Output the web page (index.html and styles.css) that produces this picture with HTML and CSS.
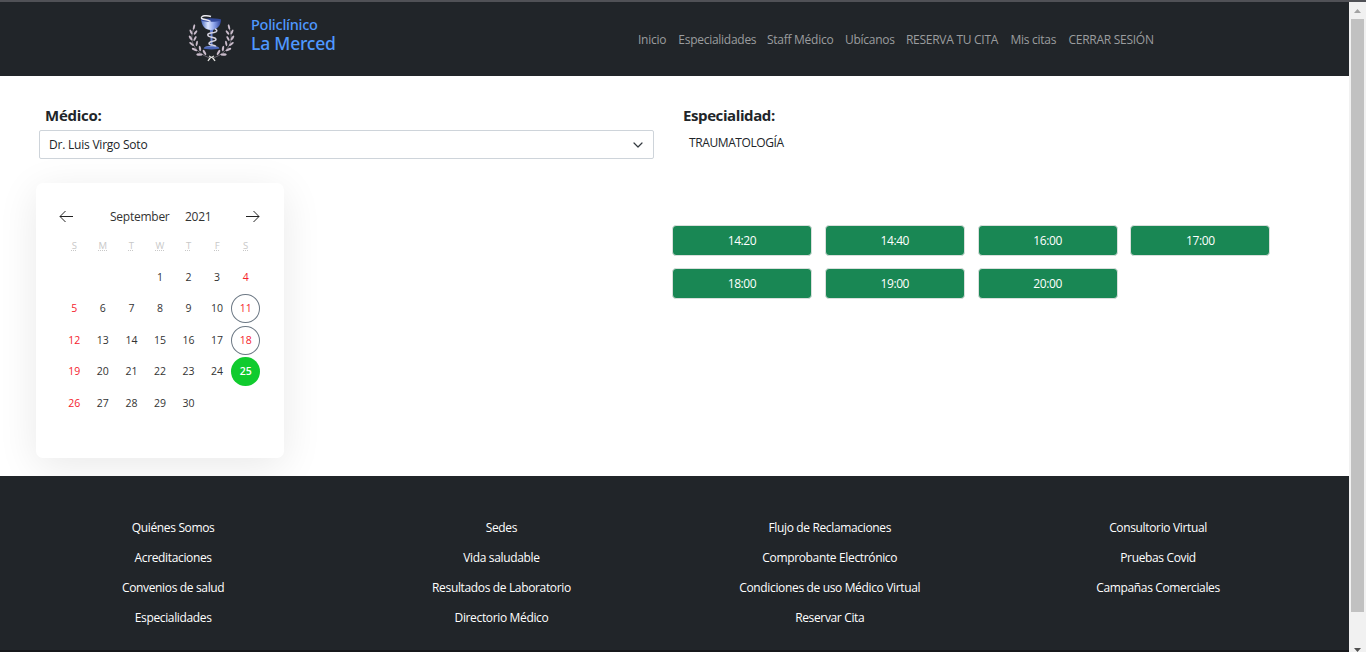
FILE: index.html
```html
<!DOCTYPE html>
<html lang="es">
<head>
<meta charset="utf-8">
<title>Policlínico La Merced</title>
<link rel="stylesheet" href="styles.css">
</head>
<body>
<div class="window">
<div class="page">
  <header class="header">
    <a class="brand">
      <svg class="logo" width="48" height="50" viewBox="0 0 48 50" fill="none">
        <defs>
          <linearGradient id="bowl" x1="0" x2="1"><stop offset="0" stop-color="#4466bd"/><stop offset=".35" stop-color="#dce6ff"/><stop offset=".65" stop-color="#8ba2ea"/><stop offset="1" stop-color="#2f459c"/></linearGradient>
          <g id="branch">
            <path d="M6 14C0 27 7 39 22 44" stroke="#8a828e" stroke-width=".7"/>
            <g fill="#c9bbca">
              <ellipse cx="6" cy="13" rx="1" ry="2.700" transform="rotate(15 6 13)"/>
              <ellipse cx="3" cy="18" rx="1" ry="2.700" transform="rotate(-25 3 18)"/>
              <ellipse cx="7.500" cy="18.500" rx="1" ry="2.600" transform="rotate(40 7.500 18.500)"/>
              <ellipse cx="2.600" cy="24" rx="1.100" ry="2.800" transform="rotate(-35 2.600 24)"/>
              <ellipse cx="7" cy="24.500" rx="1" ry="2.700" transform="rotate(30 7 24.500)"/>
              <ellipse cx="3.600" cy="30" rx="1.100" ry="2.900" transform="rotate(-52 3.600 30)"/>
              <ellipse cx="8.800" cy="29.500" rx="1" ry="2.700" transform="rotate(12 8.800 29.500)"/>
              <ellipse cx="6.500" cy="35.500" rx="1.200" ry="3" transform="rotate(-65 6.500 35.500)"/>
              <ellipse cx="12" cy="34.500" rx="1.100" ry="2.900" transform="rotate(-10 12 34.500)"/>
              <ellipse cx="11.500" cy="40.500" rx="1.300" ry="3.200" transform="rotate(-88 11.500 40.500)"/>
              <ellipse cx="16.500" cy="38.500" rx="1.200" ry="3" transform="rotate(-30 16.500 38.500)"/>
            </g>
          </g>
        </defs>
        <use href="#branch"/>
        <use href="#branch" transform="matrix(-1 0 0 1 47 0)"/>
        <path d="M20 47c1-2 3-4 6-5M27 47c-1-2-3-4-6-5" stroke="#e2e2df" stroke-width="1.300"/>
        <path d="M21.500 15h4l-1 4v14h-2V19z" fill="#6680ce"/>
        <path d="M13 5.500h20c0 6-4 10.500-10 10.500S14 12 13 5.500z" fill="url(#bowl)"/>
        <ellipse cx="23" cy="6" rx="10" ry="1.800" fill="#334a9c"/>
        <path d="M16 34c1-2 4-2 7-2s7 0 8 2z" fill="#7289ce"/>
        <ellipse cx="23.500" cy="34.200" rx="8" ry="1.300" fill="#4863b5"/>
        <path d="M23 2.500c-4-1.500-10-1-9.500 1.500.5 2 6 1 9 3.500" stroke="#eceaf0" stroke-width="1.500"/>
        <path d="M27 15c3 1 2 3-1 3.500-4 .5-7 1-6 3 1 2.500 8 1 8 4 0 2-7 1.500-7 4 0 2 6 1 7 3" stroke="#d5d3e0" stroke-width="1.500"/>
      </svg>
      <span class="brand-name"><span class="brand-top">Policlínico</span><span class="brand-bottom">La Merced</span></span>
    </a>
    <nav class="nav"><a>Inicio</a><a>Especialidades</a><a>Staff Médico</a><a>Ubícanos</a><a>RESERVA TU CITA</a><a>Mis citas</a><a>CERRAR SESIÓN</a></nav>
  </header>

  <main class="main">
    <section class="doctor">
      <h2 class="label doctor-label">Médico:</h2>
      <div class="select"><span>Dr. Luis Virgo Soto</span>
        <svg width="10" height="8" viewBox="0 0 10 8" fill="none"><path d="M1 2l4 4 4-4" stroke="#343a40" stroke-width="1.200" stroke-linecap="round" stroke-linejoin="round"/></svg>
      </div>
      <div class="calendar">
        <div class="calendar-head">
          <svg width="14" height="12" viewBox="0 0 14 12" fill="none"><path d="M14 5.500H1M6.500 0L1 5.500 6.500 11" stroke="#222" stroke-width="1"/></svg>
          <span class="month">September</span><span class="year">2021</span>
          <svg width="14" height="12" viewBox="0 0 14 12" fill="none"><path d="M0 5.500h13M7.500 0L13 5.500 7.500 11" stroke="#222" stroke-width="1"/></svg>
        </div>
        <div class="weekdays"><span><abbr title="Sunday">S</abbr></span><span><abbr title="Monday">M</abbr></span><span><abbr title="Tuesday">T</abbr></span><span><abbr title="Wednesday">W</abbr></span><span><abbr title="Thursday">T</abbr></span><span><abbr title="Friday">F</abbr></span><span><abbr title="Saturday">S</abbr></span></div>
        <div class="days">
          <span class="day first">1</span><span class="day">2</span><span class="day">3</span><span class="day red">4</span>
          <span class="day red">5</span><span class="day">6</span><span class="day">7</span><span class="day">8</span><span class="day">9</span><span class="day">10</span><span class="day red ring">11</span>
          <span class="day red">12</span><span class="day">13</span><span class="day">14</span><span class="day">15</span><span class="day">16</span><span class="day">17</span><span class="day red ring">18</span>
          <span class="day red">19</span><span class="day">20</span><span class="day">21</span><span class="day">22</span><span class="day">23</span><span class="day">24</span><span class="day selected">25</span>
          <span class="day red">26</span><span class="day">27</span><span class="day">28</span><span class="day">29</span><span class="day">30</span>
        </div>
      </div>
    </section>
    <section class="specialty">
      <h2 class="label specialty-label">Especialidad:</h2>
      <p class="specialty-name">TRAUMATOLOGÍA</p>
      <div class="slots"><button class="slot">14:20</button><button class="slot">14:40</button><button class="slot">16:00</button><button class="slot">17:00</button><button class="slot">18:00</button><button class="slot">19:00</button><button class="slot">20:00</button></div>
    </section>
  </main>

  <footer class="footer">
    <div class="links"><a>Quiénes Somos</a><a>Acreditaciones</a><a>Convenios de salud</a><a>Especialidades</a></div>
    <div class="links"><a>Sedes</a><a>Vida saludable</a><a>Resultados de Laboratorio</a><a>Directorio Médico</a></div>
    <div class="links"><a>Flujo de Reclamaciones</a><a>Comprobante Electrónico</a><a>Condiciones de uso Médico Virtual</a><a>Reservar Cita</a></div>
    <div class="links"><a>Consultorio Virtual</a><a>Pruebas Covid</a><a>Campañas Comerciales</a></div>
  </footer>
</div>
<div class="scrollbar">
  <svg class="up" width="7" height="4" viewBox="0 0 7 4"><path d="M0 4L3.500 0 7 4z" fill="#a3a3a3"/></svg>
  <div class="thumb"></div>
  <svg class="down" width="7" height="4" viewBox="0 0 7 4"><path d="M0 0h7L3.500 4z" fill="#505050"/></svg>
</div>
</div>
</body>
</html>
```
FILE: styles.css
```css
* { box-sizing: border-box; }
body {
  margin: 0;
  height: 652px;
  overflow: hidden;
  background: #fff;
  color: #212529;
  font-family: "Open Sans", "Noto Sans", sans-serif;
  font-size: 12px;
}
.window {
  display: flex;
  height: 652px;
  border-top: 2px solid #505156;
}
.page {
  width: 1349px;
  display: flex;
  flex-direction: column;
}
.header {
  height: 74px;
  background: #212529;
  display: flex;
  padding-left: 188px;
}
.brand { display: flex; width: 450px; padding-top: 12px; }
.logo { flex: none; }
.brand-name {
  display: flex;
  flex-direction: column;
  margin-left: 15px;
  padding-top: 1px;
  color: #4f98ff;
  font-family: "Noto Sans", "Open Sans", sans-serif;
  font-weight: 500;
}
.brand-top { font-size: 14.500px; line-height: 19px; letter-spacing: -.25px; }
.brand-bottom { font-size: 17.500px; line-height: 19px; letter-spacing: -.2px; }
.nav {
  display: grid;
  grid-template-columns: 40.300px 88.700px 78px 61px 104.500px 58px 92px;
  line-height: 18px;
  padding-top: 29px;
  color: #9b9d9f;
  white-space: nowrap;
  letter-spacing: -.27px;
  font-weight: 500;
}
.main {
  height: 400px;
  display: flex;
  padding-top: 29px;
}
.doctor { width: 672px; padding-left: 39px; }
.label { margin: 0; font-size: 15px; line-height: 20px; font-weight: 700; letter-spacing: -.4px; }
.doctor-label { padding-left: 6px; letter-spacing: -.25px; }
.select {
  width: 615px;
  height: 29px;
  margin-top: 5px;
  padding: 0 10px 0 9px;
  border: 1px solid #ced4da;
  border-radius: 2px;
  display: flex;
  align-items: center;
  justify-content: space-between;
  letter-spacing: -.22px;
}
.calendar {
  width: 248px;
  height: 275px;
  margin: 24px 0 0 -3px;
  padding: 26px 24px 0;
  border-radius: 7px;
  background: #fff;
  box-shadow: 0 8px 40px rgba(0, 0, 0, .09);
}
.calendar-head {
  display: grid;
  grid-template-columns: 50px 75px 62px 14px;
  align-items: center;
  height: 12px;
  margin-left: -1px;
  color: #333;
}
.calendar-head span { line-height: 14px; padding: 1px 0 0 1px; letter-spacing: -.25px; }
.weekdays {
  display: grid;
  grid-template-columns: repeat(7, 28.57px);
  line-height: 16px;
  margin-top: 17px;
  font-size: 9.500px;
  text-align: center;
  color: #c8c8c8;
}
.days {
  display: grid;
  grid-template-columns: repeat(7, 28.57px);
  grid-auto-rows: 31.500px;
  align-items: center;
  margin-top: 7.500px;
}
.day {
  height: 29px;
  line-height: 29px;
  border-radius: 50%;
  text-align: center;
  font-size: 10.500px;
  color: #333;
}
.first { grid-column: 4; }
.red { color: #f5222d; }
.ring { border: 1px solid #6d7985; line-height: 27px; }
.selected { background: #10cb2e; color: #fff; font-weight: 600; }
.specialty { width: 677px; }
.specialty-label { padding-left: 11px; }
.specialty-name { margin: 9px 0 0 17px; line-height: 18px; letter-spacing: -.4px; }
.slots {
  display: grid;
  grid-template-columns: repeat(4, 140px);
  grid-auto-rows: 31px;
  gap: 12px 12.800px;
  margin-top: 73px;
}
.slot {
  padding: 0;
  border: 1px solid #d9dfdc;
  border-radius: 4px;
  background: #198754;
  color: #fff;
  font: 500 12px "Open Sans", "Noto Sans", sans-serif;
  letter-spacing: -.4px;
}
.footer {
  height: 176px;
  background: #212529;
  border-bottom: 2px solid #17181b;
  color: #fff;
  display: grid;
  grid-template-columns: 328.300px 328.300px 328.300px 328.300px;
  padding: 37px 0 0 9px;
}
.links {
  display: flex;
  flex-direction: column;
  align-items: center;
  line-height: 30px;
  letter-spacing: -.35px;
  font-weight: 500;
}
.scrollbar {
  width: 17px;
  background: #f1f1f1;
  display: flex;
  flex-direction: column;
  align-items: center;
}
.up { margin-top: 7px; }
.thumb { width: 13px; height: 593px; margin-top: 6px; background: #c1c1c1; }
.down { margin-top: 36px; }
```
